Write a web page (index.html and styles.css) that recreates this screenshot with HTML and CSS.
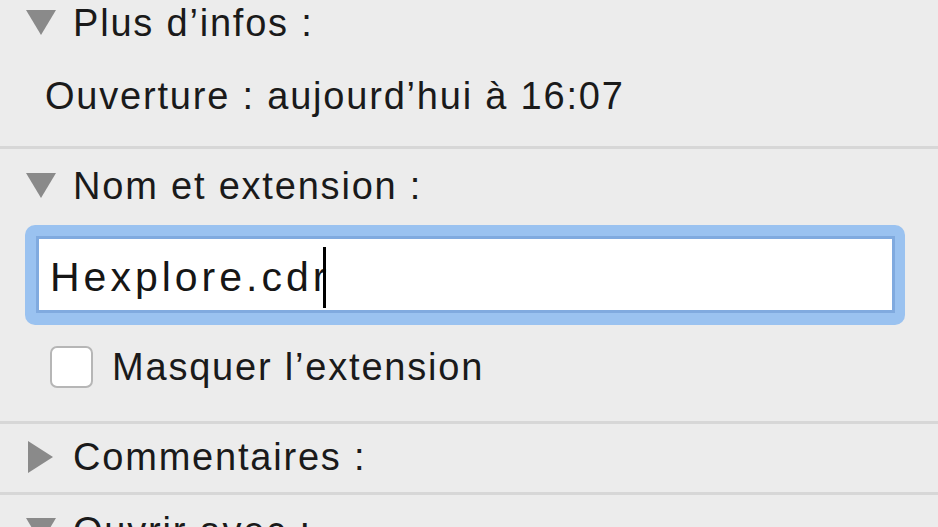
FILE: index.html
```html
<!DOCTYPE html>
<html lang="fr">
<head>
<meta charset="utf-8">
<title>Infos</title>
<link rel="stylesheet" href="styles.css">
</head>
<body>
<div class="panel">
  <section class="sec sec-more">
    <div class="disclosure">
      <svg class="tri" width="30" height="26" viewBox="0 0 30 26"><polygon points="0,0 30,0 15,25" /></svg>
      <span class="label">Plus d’infos :</span>
    </div>
    <div class="info-line">Ouverture : aujourd’hui à 16:07</div>
  </section>
  <hr class="sep">
  <section class="sec sec-name">
    <div class="disclosure">
      <svg class="tri" width="30" height="26" viewBox="0 0 30 26"><polygon points="0,0 30,0 15,25" /></svg>
      <span class="label">Nom et extension :</span>
    </div>
    <div class="field-ring">
      <div class="field"><span class="field-text">Hexplore.cdr</span><span class="caret"></span></div>
    </div>
    <label class="check-row">
      <span class="checkbox"></span>
      <span class="check-label">Masquer l’extension</span>
    </label>
  </section>
  <hr class="sep">
  <section class="sec sec-comments">
    <div class="disclosure">
      <svg class="tri" width="30" height="33" viewBox="0 0 30 33"><polygon points="2,0 27,16 2,32" /></svg>
      <span class="label">Commentaires :</span>
    </div>
  </section>
  <hr class="sep">
  <section class="sec sec-open">
    <div class="disclosure">
      <svg class="tri" width="30" height="26" viewBox="0 0 30 26"><polygon points="0,0 30,0 15,25" /></svg>
      <span class="label">Ouvrir avec :</span>
    </div>
  </section>
</div>
</body>
</html>
```

FILE: styles.css
```css
html, body {
  margin: 0;
  padding: 0;
  background: #ececec;
  overflow: hidden;
}

body {
  width: 938px;
  height: 527px;
  font-family: "Liberation Sans", Arial, sans-serif;
  color: #1a1a1a;
  font-size: 38px;
  letter-spacing: 1.8px;
}

.panel {
  display: flex;
  flex-direction: column;
}

.sec {
  display: flex;
  flex-direction: column;
}

.disclosure {
  display: flex;
  align-items: center;
  height: 44px;
  line-height: 44px;
  padding-left: 26px;
  gap: 17px;
}

.tri {
  flex: none;
  fill: #8a8a8a;
}

.label {
  white-space: nowrap;
}

.sec-more {
  padding-top: 1px;
}

.info-line {
  margin-top: 29px;
  padding-left: 45px;
  height: 44px;
  line-height: 44px;
  white-space: nowrap;
}

.sep {
  margin: 28px 0 0 0;
  border: 0;
  height: 3px;
  background: #d7d7d7;
}

.sec-name {
  padding-top: 15px;
}

.field-ring {
  margin: 17px 0 0 25px;
  width: 880px;
  box-sizing: border-box;
  padding: 11px 10px 12px 11px;
  background: #9ac2f0;
  border-radius: 10px;
}

.field {
  height: 77px;
  box-sizing: border-box;
  border: 3px solid #80aadf;
  background: #ffffff;
  display: flex;
  align-items: center;
  padding: 5px 0 0 11px;
  font-size: 41px;
  letter-spacing: 4px;
  color: #161616;
}

.field-text {
  white-space: nowrap;
}

.caret {
  display: inline-block;
  width: 3px;
  height: 61px;
  background: #000;
  margin-left: -7px;
  margin-top: 1px;
}

.check-row {
  display: flex;
  align-items: center;
  margin-top: 20px;
  padding-left: 50px;
  height: 44px;
  gap: 19px;
}

.checkbox {
  flex: none;
  width: 43px;
  height: 42px;
  box-sizing: border-box;
  border: 2px solid #b6b6b6;
  border-radius: 7px;
  background: #ffffff;
}

.check-label {
  line-height: 44px;
  white-space: nowrap;
}

.sec-name + .sep {
  margin-top: 32px;
}

.sec-comments {
  padding-top: 11px;
}

.sec-comments + .sep {
  margin-top: 13px;
}

.sec-open {
  padding-top: 14px;
}
```
